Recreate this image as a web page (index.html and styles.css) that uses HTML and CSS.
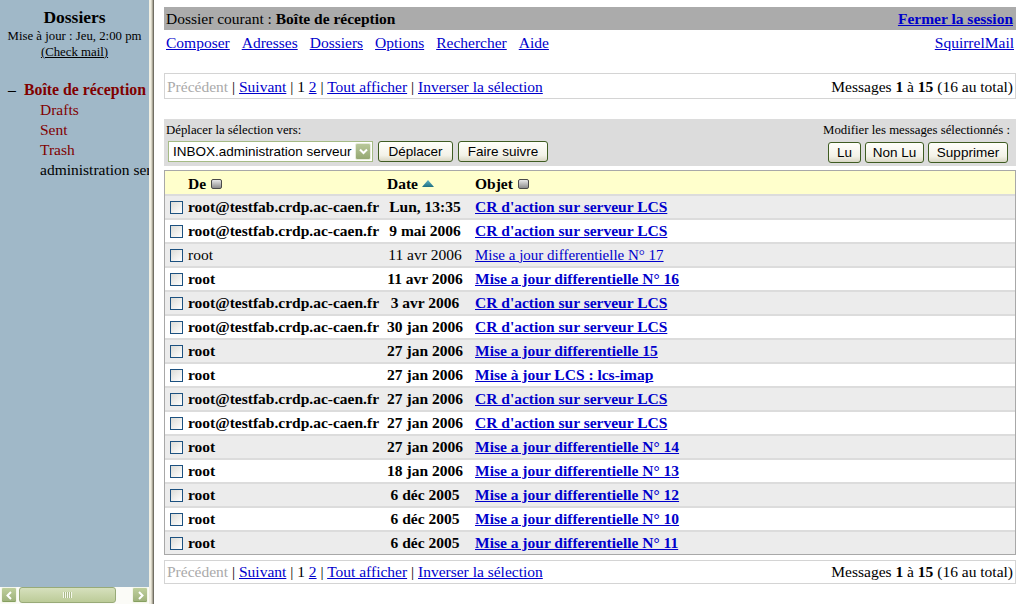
FILE: index.html
```html
<!DOCTYPE html>
<html lang="fr">
<head>
<meta charset="utf-8">
<title>SquirrelMail - Boîte de réception</title>
<link rel="stylesheet" href="styles.css">
</head>
<body>
<div class="app">
  <aside class="leftframe">
    <div class="left-content">
      <div class="lf-title">Dossiers</div>
      <div class="lf-small">Mise à jour : Jeu, 2:00 pm</div>
      <div class="lf-small"><a class="check" href="#">(Check mail)</a></div>
      <ul class="folders">
        <li class="inbox"><span class="dash">–</span><b>Boîte de réception</b></li>
        <li class="sub red">Drafts</li>
        <li class="sub red">Sent</li>
        <li class="sub red">Trash</li>
        <li class="sub">administration serveur</li>
      </ul>
    </div>
    <div class="hscroll">
      <span class="sb-btn"><svg width="9" height="9" viewBox="0 0 9 9"><polyline points="6,1 2.5,4.5 6,8" fill="none" stroke="#fff" stroke-width="2"/></svg></span>
      <span class="sb-thumb"><span class="grip"></span></span>
      <span class="sb-space"></span>
      <span class="sb-btn"><svg width="9" height="9" viewBox="0 0 9 9"><polyline points="3,1 6.5,4.5 3,8" fill="none" stroke="#fff" stroke-width="2"/></svg></span>
    </div>
  </aside>
  <div class="divider"></div>
  <main class="rightframe">
    <div class="titlebar">
      <span>Dossier courant : <b>Boîte de réception</b></span>
      <a class="logout" href="#">Fermer la session</a>
    </div>
    <nav class="nav">
      <div class="navlinks">
        <a href="#">Composer</a>
        <a href="#">Adresses</a>
        <a href="#">Dossiers</a>
        <a href="#">Options</a>
        <a href="#">Rechercher</a>
        <a href="#">Aide</a>
      </div>
      <a href="#">SquirrelMail</a>
    </nav>

    <div class="pager">
      <span><span class="disabled">Précédent</span> | <a href="#">Suivant</a> | 1 <a href="#">2</a> | <a href="#">Tout afficher</a> | <a href="#">Inverser la sélection</a></span>
      <span>Messages <b>1</b> à <b>15</b> (16 au total)</span>
    </div>

    <div class="actions">
      <div class="act-left">
        <div class="act-label">Déplacer la sélection vers:</div>
        <div class="act-controls">
          <span class="select"><span class="select-text">INBOX.administration serveur</span><span class="select-btn"><svg width="9" height="7" viewBox="0 0 9 7"><polyline points="1,1.5 4.5,5 8,1.5" fill="none" stroke="#fff" stroke-width="2"/></svg></span></span>
          <button class="btn btn-move">Déplacer</button>
          <button class="btn btn-fwd">Faire suivre</button>
        </div>
      </div>
      <div class="act-right">
        <div class="act-label">Modifier les messages sélectionnés :</div>
        <div class="act-controls">
          <button class="btn btn-lu">Lu</button>
          <button class="btn btn-nonlu">Non Lu</button>
          <button class="btn btn-del">Supprimer</button>
        </div>
      </div>
    </div>

    <div class="msgs">
      <div class="row head">
        <span></span>
        <span class="c-from"><b>De</b><span class="sorticon"></span></span>
        <span class="c-hdate"><b>Date</b><svg class="tri" width="12" height="7" viewBox="0 0 12 7"><defs><linearGradient id="tg" x1="0" y1="0" x2="0" y2="1"><stop offset="0" stop-color="#5fb3c4"/><stop offset="1" stop-color="#1f6f82"/></linearGradient></defs><polygon points="0,7 6,0 12,7" fill="url(#tg)"/></svg></span>
        <span class="c-subj"><b>Objet</b><span class="sorticon"></span></span>
      </div>

      <div class="row odd unread"><span class="c-cb"><input type="checkbox"></span><span class="c-from">root@testfab.crdp.ac-caen.fr</span><span class="c-date">Lun, 13:35</span><span class="c-subj"><a href="#">CR d'action sur serveur LCS</a></span></div>
      <div class="row even unread"><span class="c-cb"><input type="checkbox"></span><span class="c-from">root@testfab.crdp.ac-caen.fr</span><span class="c-date">9 mai 2006</span><span class="c-subj"><a href="#">CR d'action sur serveur LCS</a></span></div>
      <div class="row odd read"><span class="c-cb"><input type="checkbox"></span><span class="c-from">root</span><span class="c-date">11 avr 2006</span><span class="c-subj"><a href="#">Mise a jour differentielle N° 17</a></span></div>
      <div class="row even unread"><span class="c-cb"><input type="checkbox"></span><span class="c-from">root</span><span class="c-date">11 avr 2006</span><span class="c-subj"><a href="#">Mise a jour differentielle N° 16</a></span></div>
      <div class="row odd unread"><span class="c-cb"><input type="checkbox"></span><span class="c-from">root@testfab.crdp.ac-caen.fr</span><span class="c-date">3 avr 2006</span><span class="c-subj"><a href="#">CR d'action sur serveur LCS</a></span></div>
      <div class="row even unread"><span class="c-cb"><input type="checkbox"></span><span class="c-from">root@testfab.crdp.ac-caen.fr</span><span class="c-date">30 jan 2006</span><span class="c-subj"><a href="#">CR d'action sur serveur LCS</a></span></div>
      <div class="row odd unread"><span class="c-cb"><input type="checkbox"></span><span class="c-from">root</span><span class="c-date">27 jan 2006</span><span class="c-subj"><a href="#">Mise a jour differentielle 15</a></span></div>
      <div class="row even unread"><span class="c-cb"><input type="checkbox"></span><span class="c-from">root</span><span class="c-date">27 jan 2006</span><span class="c-subj"><a href="#">Mise à jour LCS : lcs-imap</a></span></div>
      <div class="row odd unread"><span class="c-cb"><input type="checkbox"></span><span class="c-from">root@testfab.crdp.ac-caen.fr</span><span class="c-date">27 jan 2006</span><span class="c-subj"><a href="#">CR d'action sur serveur LCS</a></span></div>
      <div class="row even unread"><span class="c-cb"><input type="checkbox"></span><span class="c-from">root@testfab.crdp.ac-caen.fr</span><span class="c-date">27 jan 2006</span><span class="c-subj"><a href="#">CR d'action sur serveur LCS</a></span></div>
      <div class="row odd unread"><span class="c-cb"><input type="checkbox"></span><span class="c-from">root</span><span class="c-date">27 jan 2006</span><span class="c-subj"><a href="#">Mise a jour differentielle N° 14</a></span></div>
      <div class="row even unread"><span class="c-cb"><input type="checkbox"></span><span class="c-from">root</span><span class="c-date">18 jan 2006</span><span class="c-subj"><a href="#">Mise a jour differentielle N° 13</a></span></div>
      <div class="row odd unread"><span class="c-cb"><input type="checkbox"></span><span class="c-from">root</span><span class="c-date">6 déc 2005</span><span class="c-subj"><a href="#">Mise a jour differentielle N° 12</a></span></div>
      <div class="row even unread"><span class="c-cb"><input type="checkbox"></span><span class="c-from">root</span><span class="c-date">6 déc 2005</span><span class="c-subj"><a href="#">Mise a jour differentielle N° 10</a></span></div>
      <div class="row odd unread"><span class="c-cb"><input type="checkbox"></span><span class="c-from">root</span><span class="c-date">6 déc 2005</span><span class="c-subj"><a href="#">Mise a jour differentielle N° 11</a></span></div>
    </div>

    <div class="pager pager-bottom">
      <span><span class="disabled">Précédent</span> | <a href="#">Suivant</a> | 1 <a href="#">2</a> | <a href="#">Tout afficher</a> | <a href="#">Inverser la sélection</a></span>
      <span>Messages <b>1</b> à <b>15</b> (16 au total)</span>
    </div>
  </main>
</div>
</body>
</html>
```

FILE: styles.css
```css
* { box-sizing: border-box; }

html, body {
  margin: 0;
  padding: 0;
  height: 604px;
  overflow: hidden;
  background: #fff;
  font-family: "Liberation Serif", "Times New Roman", serif;
  font-size: 15.5px;
  color: #000;
}

a { color: #0000cc; text-decoration: underline; }

.app {
  display: flex;
  height: 604px;
}

/* ---------- left frame ---------- */
.leftframe {
  width: 149px;
  flex: 0 0 149px;
  background: #a0b8c8;
  display: flex;
  flex-direction: column;
  overflow: hidden;
}

.left-content {
  flex: 1;
  overflow: hidden;
  padding-top: 7px;
}

.lf-title {
  text-align: center;
  font-weight: bold;
  font-size: 17.5px;
  line-height: 21px;
}

.lf-small {
  text-align: center;
  font-size: 12.8px;
  line-height: 16px;
}

.check { color: #000; }

.folders {
  list-style: none;
  margin: 20px 0 0 0;
  padding: 0;
  white-space: nowrap;
}

.folders li {
  line-height: 20px;
  height: 20px;
}

.inbox {
  color: #800000;
  padding-left: 8px;
  font-size: 15.8px;
}

.dash {
  color: #000;
  display: inline-block;
  width: 16px;
}

.sub { padding-left: 40px; }
.red { color: #800000; }

.hscroll {
  flex: 0 0 17px;
  height: 17px;
  display: flex;
  align-items: stretch;
  background: #fbfbf7;
  padding: 0 1px 1px 1px;
  gap: 1px;
}

.sb-btn {
  width: 16px;
  flex: 0 0 16px;
  display: flex;
  align-items: center;
  justify-content: center;
  background: linear-gradient(#bfcf9c, #9db07a);
  border: 1px solid #f4f6ea;
  border-radius: 2px;
  box-shadow: inset 0 -1px 0 #86a060;
}

.sb-thumb {
  width: 97px;
  flex: 0 0 97px;
  margin-left: 1px;
  display: flex;
  align-items: center;
  justify-content: center;
  background: linear-gradient(#d6e0bd, #bccb98);
  border: 1px solid #98aa78;
  border-radius: 3px;
}

.grip {
  width: 9px;
  height: 6px;
  background: repeating-linear-gradient(90deg, #f5f8ec 0 1px, #aab98a 1px 2px);
}

.sb-space { flex: 1; }

/* ---------- divider ---------- */
.divider {
  width: 7px;
  flex: 0 0 7px;
  background: linear-gradient(90deg, #f1efe2 0 2px, #d8d5c6 2px 3px, #aca899 3px 4px, #716f64 4px 5px, #fff 5px);
}

/* ---------- right frame ---------- */
.rightframe {
  flex: 1;
  padding: 7px 8px 0 8px;
  min-width: 0;
}

.titlebar {
  background: #ababab;
  height: 23px;
  line-height: 23px;
  padding: 0 3px 0 2px;
  display: flex;
  justify-content: space-between;
}

.logout { font-weight: bold; }

.nav {
  display: flex;
  justify-content: space-between;
  padding: 3px 2px 0 2px;
  line-height: 20px;
}

.navlinks {
  display: flex;
  gap: 12px;
}

.pager {
  margin-top: 20px;
  border: 1px solid #d4d4d4;
  height: 26px;
  line-height: 25px;
  padding: 0 2px;
  display: flex;
  justify-content: space-between;
}

.pager-bottom {
  margin-top: 5px;
  height: 24px;
  line-height: 21px;
}

.disabled { color: #aaaaaa; }

/* ---------- actions box ---------- */
.actions {
  margin-top: 20px;
  background: #dcdcdc;
  height: 47px;
  padding: 3px 6px 0 2px;
  display: flex;
  justify-content: space-between;
}

.act-label {
  font-size: 12.8px;
  line-height: 16px;
}

.act-right .act-label { text-align: right; }

.act-controls {
  display: flex;
  align-items: center;
  margin-top: 3px;
}

.act-left .act-controls { padding-left: 2px; gap: 5px; }
.act-right .act-controls { justify-content: flex-end; gap: 4px; padding-right: 2px; margin-top: 4px; }

.select {
  width: 205px;
  height: 21px;
  border: 1px solid #a5bb85;
  background: #fff;
  display: flex;
  align-items: center;
  justify-content: space-between;
  padding: 1px 1px 1px 4px;
  font-family: "Liberation Sans", Arial, sans-serif;
  font-size: 13.5px;
}

.select-btn {
  width: 16px;
  height: 17px;
  display: flex;
  align-items: center;
  justify-content: center;
  background: linear-gradient(#b9c89a, #95a872);
  border: 1px solid #e7eddb;
  border-radius: 2px;
}

.btn {
  font-family: "Liberation Sans", Arial, sans-serif;
  font-size: 13.5px;
  height: 21px;
  padding: 0 4px;
  border: 1px solid #3f5c22;
  border-radius: 3px;
  background: linear-gradient(#fffffb, #f3f2e8 70%, #d9d7c5);
  color: #000;
}

.btn-move { width: 75px; }
.btn-fwd { width: 90px; }
.btn-lu { width: 33px; }
.btn-nonlu { width: 59px; }
.btn-del { width: 80px; }

/* ---------- message list ---------- */
.msgs {
  margin-top: 4px;
  border: 1px solid #a8a8a8;
  background: #dcdcdc;
  display: flex;
  flex-direction: column;
  gap: 2px;
}

.row {
  display: grid;
  grid-template-columns: 20px 198px 84px 1fr;
  height: 22px;
  align-items: center;
  white-space: nowrap;
}

.row.head {
  height: 23px;
  padding-top: 2px;
  background: #ffffcc;
}

.row.odd { background: #ececec; }
.row.even { background: #ffffff; }
.row.unread { font-weight: bold; }
.row.read .c-subj { font-size: 15px; }

.c-cb {
  padding-left: 5px;
  display: flex;
  align-items: center;
}

.c-cb input {
  appearance: none;
  -webkit-appearance: none;
  margin: 0;
  width: 13px;
  height: 13px;
  border: 1px solid #1c5180;
  background: linear-gradient(135deg, #dcdcd7, #ffffff);
}

.c-from {
  padding-left: 3px;
  display: flex;
  align-items: center;
}

.c-date { text-align: center; }

.c-hdate {
  padding-left: 4px;
  display: flex;
  align-items: center;
}

.c-subj {
  padding-left: 8px;
  display: flex;
  align-items: center;
}

.sorticon {
  display: inline-block;
  width: 11px;
  height: 10px;
  margin-left: 5px;
  border: 1px solid #4a4a4a;
  border-radius: 2px;
  background: linear-gradient(#e8e8e8, #8c8c8c);
}

.tri { margin-left: 4px; }
```
